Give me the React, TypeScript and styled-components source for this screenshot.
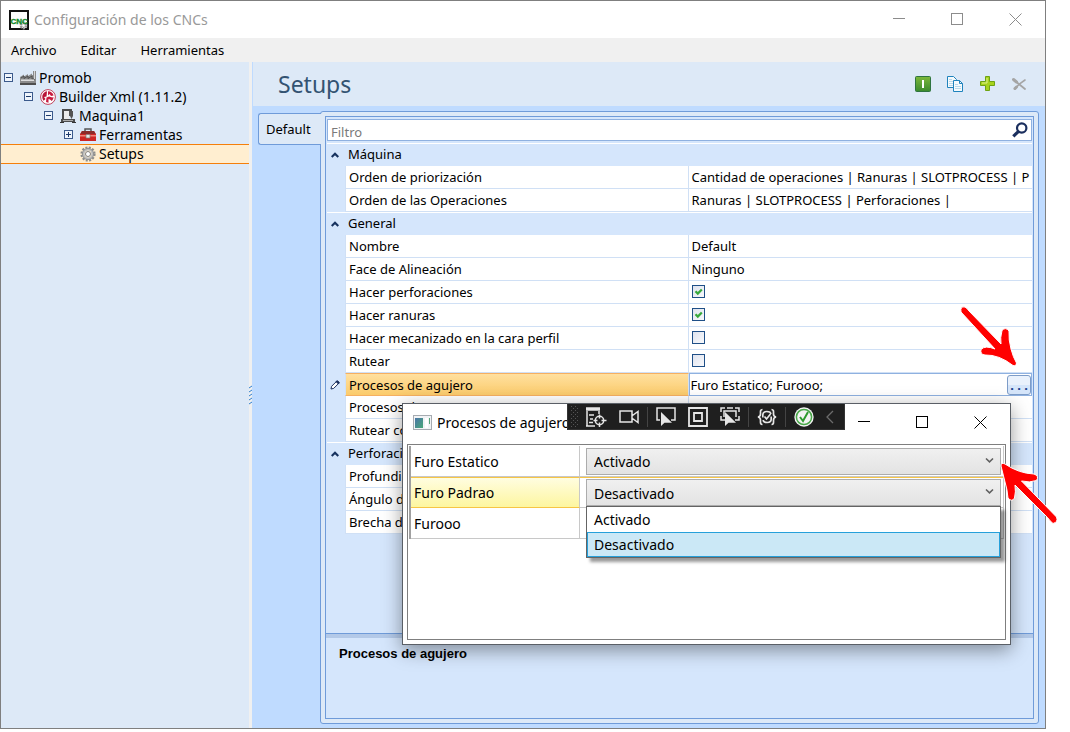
import React from "react";
import styled, { createGlobalStyle, css } from "styled-components";

const GlobalStyle = createGlobalStyle`
  *, *::before, *::after { box-sizing: border-box; }
  body { margin: 0; background: #fff; }
  button, input, select { font: inherit; color: inherit; margin: 0; }
  svg { display: block; flex: none; }
`;

const uiFont = `"Noto Sans", "Open Sans", sans-serif`;

/* ---------- main window ---------- */

const Page = styled.div`
  position: relative;
  font-family: ${uiFont};
  font-size: 13px;
  color: #000;
  padding: 0 24px 3px 0;
`;

const AppWindow = styled.div`
  display: flex;
  flex-direction: column;
  min-height: calc(100vh - 3px);
  border: 1px solid #7f7f7f;
  background: #fff;
`;

const TitleBar = styled.header<{ $active?: boolean }>`
  display: flex;
  align-items: center;
  height: 37px;
  padding: 0 1px 0 8px;
  gap: 5px;
  color: ${(p) => (p.$active ? "#000" : "#999")};
  font-size: 14px;
`;

const TitleText = styled.h1`
  flex: 1;
  margin: 0;
  font: inherit;
  white-space: nowrap;
`;

const Captions = styled.div`
  display: flex;
  height: 100%;
`;

const CaptionButton = styled.button`
  display: flex;
  align-items: center;
  justify-content: center;
  width: 58px;
  height: 100%;
  padding: 0;
  border: 0;
  background: none;
`;

const MenuBar = styled.nav`
  display: flex;
  align-items: center;
  gap: 24px;
  height: 24px;
  padding-left: 10px;
  background: #f0f0f0;
`;

const MenuItem = styled.button`
  border: 0;
  padding: 0;
  background: none;
  font-size: 13px;
  line-height: 20px;
`;

const Body = styled.div`
  flex: 1;
  display: flex;
`;

/* ---------- tree ---------- */

const TreePane = styled.aside`
  width: 248px;
  flex: none;
  background: #dde9f7;
`;

const Tree = styled.ul`
  list-style: none;
  margin: 0;
  padding: 6px 0 0;
`;

const TreeRow = styled.li<{ $level: number; $selected?: boolean }>`
  display: flex;
  align-items: center;
  height: 19px;
  padding-left: ${(p) => 3 + p.$level * 20}px;
  font-size: 14px;
  line-height: 18px;
  white-space: nowrap;
  ${(p) =>
    p.$selected &&
    css`
      height: 20px;
      background: #ffeed0;
      border-top: 1px solid #f57f0a;
      border-bottom: 1px solid #f57f0a;
    `}
`;

const Expander = styled.button`
  width: 9px;
  height: 9px;
  padding: 0;
  border: 0;
  background: none;
`;

const ExpanderSlot = styled.span`
  width: 16px;
  flex: none;
  display: flex;
`;

const TreeLabel = styled.span`
  padding-left: 3px;
`;

const Splitter = styled.div`
  display: flex;
  align-items: center;
  width: 3px;
  flex: none;
  background: #f0f0f0;
`;

/* ---------- content ---------- */

const Content = styled.main`
  flex: 1;
  min-width: 0;
  display: flex;
  flex-direction: column;
  background: #bfdbff;
`;

const ContentHeader = styled.div`
  display: flex;
  align-items: center;
  justify-content: space-between;
  height: 44px;
  padding: 0 18px 0 25px;
  background: #dde9f7;
  border-left: 1px solid #bfdbff;
`;

const ContentTitle = styled.h2`
  margin: 0;
  font-size: 23px;
  line-height: 32px;
  font-weight: 400;
  color: #335372;
`;

const Tools = styled.div`
  display: flex;
  gap: 16px;
`;

const ToolButton = styled.button`
  width: 16px;
  height: 16px;
  padding: 0;
  border: 0;
  background: none;
`;

const Workspace = styled.div`
  flex: 1;
  display: flex;
  align-items: stretch;
  padding: 5px 6px 4px;
`;

const Tab = styled.button`
  align-self: flex-start;
  z-index: 1;
  width: 63px;
  height: 32px;
  margin: 2px -1px 0 0;
  padding: 0 0 0 7px;
  text-align: left;
  border: 1px solid #6f9bd9;
  border-right: 0;
  border-radius: 3px 0 0 3px;
  background: #dde9f7;
`;

const TabPanel = styled.section`
  flex: 1;
  min-width: 0;
  display: flex;
  padding: 4px;
  border: 1px solid #6f9bd9;
  border-radius: 3px;
  background: #dde9f7;
`;

const GridFrame = styled.div`
  flex: 1;
  min-width: 0;
  display: flex;
  flex-direction: column;
  border: 1px solid #6f9bd9;
  background: #d5e6fc;
`;

const GridArea = styled.div`
  flex: 1;
  display: flex;
  flex-direction: column;
  gap: 2px;
  padding: 2px 1px;
`;

const FilterBox = styled.label`
  display: flex;
  align-items: center;
  height: 22px;
  padding: 0 3px;
  border: 1px solid #8fb1e0;
  background: #fff;
`;

const FilterInput = styled.input`
  flex: 1;
  min-width: 0;
  height: 20px;
  padding: 3px 0 0;
  border: 0;
  outline: 0;
  background: none;
  &::placeholder { color: #7a7a7a; opacity: 1; }
`;

const PropertyTable = styled.table`
  width: 100%;
  table-layout: fixed;
  border-collapse: separate;
  border-spacing: 0;
`;

const GutterCol = styled.col`
  width: 18px;
`;

const Gutter = styled.td`
  padding: 0;
  background: #d5e6fc;
`;

const Marker = styled.div`
  display: flex;
  justify-content: center;
  padding-right: 2px;
`;

const CategoryCell = styled.th`
  height: 23px;
  padding: 0 0 2px 3px;
  text-align: left;
  font-weight: 400;
  line-height: 20px;
  border-top: 1px solid #fff;
  background: #d5e6fc;
`;

const CategoryToggle = styled.td`
  height: 23px;
  padding: 0 0 1px;
  border-top: 1px solid #fff;
  background: #d5e6fc;
`;

const NameCell = styled.th<{ $selected?: boolean }>`
  height: 23px;
  padding: 0 0 0 3px;
  text-align: left;
  font-weight: 400;
  line-height: 20px;
  white-space: nowrap;
  overflow: hidden;
  background: #fff;
  border-left: 1px solid #d0e0f5;
  border-right: 1px solid #d0e0f5;
  border-bottom: 1px solid #d0e0f5;
  ${(p) =>
    p.$selected &&
    css`
      border-top: 1px solid #f6b062;
      border-bottom: 1px solid #f6b062;
      background: linear-gradient(#ffe0a0, #fbcb6b);
    `}
`;

const ValueCell = styled.td<{ $editing?: boolean }>`
  height: 23px;
  padding: 0 8px 0 3px;
  line-height: 20px;
  white-space: nowrap;
  overflow: hidden;
  background: #fff;
  border-bottom: 1px solid #d0e0f5;
  ${(p) =>
    p.$editing &&
    css`
      padding: 0 0 0 1px;
      border: 1px solid #8fb1e0;
    `}
`;

const Check = styled.input`
  && { margin: 0 0 1px; }
  appearance: none;
  display: block;
  width: 13px;
  height: 13px;
  border: 1px solid #1f4f87;
  background: linear-gradient(135deg, #dfe3ee, #f8f9fc);
  &:checked {
    background:
      url("data:image/svg+xml,%3Csvg xmlns='http://www.w3.org/2000/svg' width='11' height='11'%3E%3Cpath d='M2.5 5.2 4.8 7.6 8.8 3.4' fill='none' stroke='%2337a83c' stroke-width='2.2'/%3E%3C/svg%3E"),
      linear-gradient(135deg, #dfe3ee, #f8f9fc);
  }
`;

const Editor = styled.div`
  display: flex;
  align-items: center;
  height: 20px;
`;

const EditorInput = styled.input`
  flex: 1;
  min-width: 0;
  height: 20px;
  padding: 0;
  border: 0;
  outline: 0;
  background: none;
`;

const EllipsisButton = styled.button`
  width: 24px;
  height: 20px;
  padding: 0;
  border: 1px solid #7d9cc8;
  border-radius: 3px;
  background: linear-gradient(#e9f1fc 50%, #d5e5fa 50%);
  color: #1a3a8c;
  font-weight: 700;
  line-height: 16px;
`;

const HelpSplitter = styled.div`
  height: 5px;
  border-top: 1px solid #6f9bd9;
  background: #b3c9e8;
`;

const HelpPane = styled.div`
  height: 80px;
  padding: 7px 13px;
  font: 700 13px/17px "Liberation Sans", Arial, sans-serif;
`;

/* ---------- dialog ---------- */

const Dialog = styled.section`
  position: absolute;
  z-index: 2;
  left: 402px;
  top: 403px;
  width: 609px;
  height: 242px;
  display: flex;
  flex-direction: column;
  padding-bottom: 4px;
  border: 1px solid #5a5f66;
  background: #fff;
  box-shadow: 0 5px 18px rgba(0, 0, 0, 0.4);
`;

const DialogTitle = styled(TitleBar)`
  height: 36px;
  padding-left: 10px;
`;

const DialogBody = styled.div`
  flex: 1;
  margin: 4px 4px 0;
  padding: 1px 1px 0;
  border: 1px solid #7f7f7f;
`;

const ProcessTable = styled.table`
  width: 100%;
  table-layout: fixed;
  border-collapse: separate;
  border-spacing: 0;
  border-left: 2px solid #a0a0a0;
  border-right: 1px solid #c8c8c8;
`;

const LabelCol = styled.col`
  width: 169px;
`;

const ProcessName = styled.th<{ $selected?: boolean }>`
  height: 31px;
  padding: 1px 0 0 3px;
  text-align: left;
  font-size: 14px;
  font-weight: 400;
  line-height: 20px;
  border-bottom: 1px solid #c8c8c8;
  border-right: 1px solid #c8c8c8;
  ${(p) =>
    p.$selected &&
    css`
      border-top: 1px solid #f7c545;
      border-bottom: 1px solid #f7c545;
      background: linear-gradient(#fffde0, #fdf6a0);
    `}
`;

const ProcessValue = styled.td<{ $selected?: boolean }>`
  height: 31px;
  padding: 0 2px 0 6px;
  border-bottom: 1px solid #c8c8c8;
  border-top: ${(p) => (p.$selected ? "1px solid #f7c545" : "0")};
`;

const Combo = styled.div`
  position: relative;
`;

const ComboSelect = styled.select`
  appearance: none;
  display: block;
  width: 100%;
  height: 27px;
  padding: 1px 24px 0 7px;
  border: 1px solid #acacac;
  border-radius: 0;
  background: linear-gradient(#f0f0f0, #e3e3e3);
  font-size: 14px;
`;

const ComboArrow = styled.span`
  position: absolute;
  right: 7px;
  top: 9px;
  pointer-events: none;
`;

const ComboList = styled.ul`
  position: absolute;
  z-index: 1;
  top: 27px;
  left: 0;
  right: 0;
  margin: 0;
  padding: 0;
  list-style: none;
  border: 1px solid #646464;
  background: #fff;
  box-shadow: 4px 4px 3px rgba(0, 0, 0, 0.4);
`;

const ComboOption = styled.li<{ $active?: boolean }>`
  height: 25px;
  padding-left: 6px;
  font-size: 14px;
  line-height: 23px;
  border: 1px solid ${(p) => (p.$active ? "#26a0da" : "transparent")};
  background: ${(p) => (p.$active ? "#cbe8f6" : "#fff")};
`;

/* ---------- debug toolbar over the dialog ---------- */

const DebugBar = styled.div`
  position: absolute;
  top: 0;
  left: 164px;
  display: flex;
  align-items: center;
  width: 278px;
  height: 26px;
  padding: 0 8px 0 3px;
  background: #1f1f1f;
  border: 1px solid #333;
  border-top: 0;
`;

const DebugGroup = styled.div`
  display: flex;
  gap: 12px;
  padding: 0 8px;
  border-right: 1px solid #444;
  &:last-child { border-right: 0; padding-right: 0; }
`;

const DebugButton = styled.button`
  padding: 0;
  border: 0;
  background: none;
`;

const Annotations = styled.svg`
  position: absolute;
  z-index: 3;
  left: 955px;
  top: 300px;
  pointer-events: none;
`;

/* ---------- icons ---------- */

const CaptionIcons = ({ color }: { color: string }) => (
  <Captions>
    <CaptionButton aria-label="Minimizar">
      <svg width="13" height="13" stroke={color} fill="none" shapeRendering="crispEdges"><path d="M0 5.500h12" /></svg>
    </CaptionButton>
    <CaptionButton aria-label="Maximizar">
      <svg width="13" height="13" stroke={color} fill="none" shapeRendering="crispEdges"><rect x=".5" y=".5" width="11" height="11" /></svg>
    </CaptionButton>
    <CaptionButton aria-label="Cerrar">
      <svg width="13" height="13" stroke={color} fill="none"><path d="M.5.5l12 12M12.5.5l-12 12" /></svg>
    </CaptionButton>
  </Captions>
);

const CncIcon = () => (
  <svg width="20" height="20">
    <rect x="1" y="1" width="18" height="18" fill="#fdfdfd" stroke="#111" strokeWidth="2" />
    <circle cx="14.500" cy="15.500" r="2.600" fill="none" stroke="#999" strokeWidth="2.600" strokeDasharray="2 .7" />
    <text x="1.500" y="13.500" fontFamily="Liberation Sans, sans-serif" fontWeight="700" fontSize="8" fill="#128a2c" stroke="#128a2c" strokeWidth=".4">CNC</text>
  </svg>
);

const ExpanderIcon = ({ open }: { open: boolean }) => (
  <svg width="9" height="9" shapeRendering="crispEdges" stroke="#1d3a6b" fill="#eef4fb">
    <rect x=".5" y=".5" width="8" height="8" stroke="#3b5a8c" />
    <path d={open ? "M2 4.5h5" : "M2 4.5h5M4.5 2v5"} />
  </svg>
);

const FactoryIcon = () => (
  <svg width="16" height="16">
    <path d="M0 15V7l4-2.500v2l4-2.500v2l4-2.500V5h1V1h3v14z" fill="#8b8b8b" />
    <path d="M1 8l3-2v2.500l4-2.500v2.500L12 6v3h3" fill="none" stroke="#4f4f4f" />
    <path d="M1 9.500h13v1.500H1z" fill="#dcdcdc" />
    <path d="M0 13h16v2H0z" fill="#4e4e4e" />
    <path d="M14 1h1v8h-1z" fill="#d6d6d6" />
  </svg>
);

const BuilderIcon = () => (
  <svg width="16" height="16">
    <circle cx="8" cy="8" r="7.400" fill="#fff" stroke="#c0405a" strokeWidth="1" />
    <path d="M7 2.300C4.500 2.600 2.300 5 2.300 8c0 1.500.5 2.800 1.400 3.800L5.500 10 4 8l2.500-.5z" fill="#b81538" />
    <path d="M8 2.200c2.800 0 5 1.800 5.600 4.300L11 7 9.500 5 8 6.500z" fill="#c81c40" />
    <path d="M6.500 8.500l2.500-1 3.500 1 1-.5c0 1.600-.7 3-1.800 4L10 10.500 8.500 10v3.700L6 13z" fill="#c81c40" />
  </svg>
);

const MachineIcon = () => (
  <svg width="16" height="16">
    <path d="M3 12V2h8v4" fill="none" stroke="#4c4c4c" strokeWidth="2" />
    <path d="M4 3h5v8H4z" fill="#ececec" />
    <path d="M9 3h4v5l-1.500 3L10 8H9z" fill="#555" />
    <path d="M1 11h14v3H1z" fill="#4c4c4c" />
    <path d="M3 12h10v1H3z" fill="#ababab" />
    <path d="M0 14h4v1H0zM12 14h4v1h-4z" fill="#333" />
  </svg>
);

const ToolboxIcon = () => (
  <svg width="16" height="16">
    <path d="M5 4.500V2h6v2.500" fill="none" stroke="#555" strokeWidth="1.500" />
    <path d="M2 4h12l2 3v7H0V7z" fill="#cf2525" />
    <path d="M2 4h12l1.500 3H.5z" fill="#8c2a2a" />
    <path d="M0 8h16v1.500H0z" fill="#f0857a" />
    <path d="M6 7.500h4v3.500H6z" fill="#e8e8e8" stroke="#777" strokeWidth=".7" />
  </svg>
);

const GearIcon = () => (
  <svg width="16" height="16" fill="none">
    <circle cx="8" cy="8" r="6.400" stroke="#8d8d8d" strokeWidth="2.400" strokeDasharray="2 1.350" />
    <circle cx="8" cy="8" r="4.600" stroke="#bdbdbd" strokeWidth="2.400" />
    <circle cx="8" cy="8" r="5.600" stroke="#8a8a8a" strokeWidth=".8" />
    <circle cx="8" cy="8" r="2.500" stroke="#7f7f7f" strokeWidth="1" fill="#fff" />
  </svg>
);

const PowerIcon = () => (
  <svg width="16" height="16">
    <defs><linearGradient id="green" x2="0" y2="1"><stop stopColor="#7cb83a" /><stop offset="1" stopColor="#3a8a2e" /></linearGradient></defs>
    <rect x=".5" y=".5" width="15" height="15" rx="1" fill="url(#green)" stroke="#2f7440" />
    <path d="M7 4h2v8H7z" fill="#fff" />
  </svg>
);

const CopyIcon = () => (
  <svg width="16" height="16" stroke="#1f83bd" fill="#f4fafd">
    <path d="M.5.500h6l3 3v8h-9z" />
    <path d="M2 3.500h3M2 5.500h4M2 7.500h4M2 9.500h4" stroke="#b8d9ea" />
    <path d="M6.500 4.500h6l3 3v8h-9z" />
    <path d="M12.500 4.500v3h3" fill="none" />
    <path d="M8 8.500h3M8 10.500h6M8 12.500h6" stroke="#b8d9ea" />
  </svg>
);

const PlusIcon = () => (
  <svg width="16" height="16">
    <path d="M6.500.500h4v5h5v4h-5v5h-4v-5h-5v-4h5z" fill="#a6d21c" stroke="#6ea312" />
    <path d="M8 2v5H3" fill="none" stroke="#dff08c" />
  </svg>
);

const DeleteIcon = () => (
  <svg width="16" height="16" fill="none" stroke="#a5a5a5" strokeLinecap="round">
    <path d="M3 4l3 2.500 8 6.500" strokeWidth="1.800" />
    <path d="M14 4 9 7.500 3.500 13" strokeWidth="1.600" />
    <path d="M2.500 3.500l3 2.500M4 12.500l1.500-1.500" strokeWidth="3" />
  </svg>
);

const SearchIcon = () => (
  <svg width="16" height="16" fill="none" stroke="#1b2f5e">
    <circle cx="9.700" cy="6" r="4.700" strokeWidth="2.200" />
    <path d="M6.500 9.300 1.300 14.300" strokeWidth="3.200" />
  </svg>
);

const UpIcon = () => (
  <svg width="8" height="6" fill="none" stroke="#17335f" strokeWidth="2.200"><path d="M.7 5 4 1.700 7.300 5" /></svg>
);

const PencilIcon = () => (
  <svg width="10" height="10" stroke="#1b2f5e">
    <path d="M1 9l.6-2.700L6.300 1.600l2.100 2.100-4.700 4.700z" fill="#fff" />
    <path d="M6 1.500 7.500.700l1.800 1.800-.8 1.500z" fill="#1b2f5e" />
  </svg>
);

const FormIcon = () => (
  <svg width="19" height="15">
    <rect x=".5" y=".5" width="18" height="14" fill="#f1f3f5" stroke="#a6abb1" />
    <defs><linearGradient id="screen" x2="1" y2="1"><stop stopColor="#4a74a8" /><stop offset="1" stopColor="#49a878" /></linearGradient></defs>
    <rect x="2" y="3" width="8" height="10" fill="url(#screen)" />
    <rect x="12" y="3" width="3" height="10" fill="#fff" />
    <rect x="16" y="3" width="1" height="6" fill="#59a47a" />
  </svg>
);

const DownIcon = () => (
  <svg width="9" height="7" fill="none" stroke="#606060" strokeWidth="1.600"><path d="M1 1.500l3.500 3.300L8 1.500" /></svg>
);

const Grip = () => (
  <svg width="7" height="22" fill="#555">
    {[0, 4, 8, 12, 16, 20].map((y) => (
      <React.Fragment key={y}>
        <rect x="0" y={y} width="1" height="1" /><rect x="4" y={y} width="1" height="1" />
        <rect x="2" y={y + 2} width="1" height="1" /><rect x="6" y={y + 2} width="1" height="1" />
      </React.Fragment>
    ))}
  </svg>
);

const pointer = "M5 5v14l3.500-3.200 2.500 0H16z";

const TreeDebugIcon = () => (
  <svg width="21" height="20" fill="none" stroke="#e6e6e6" strokeWidth="1.500">
    <path d="M0 2h14" strokeWidth="3.500" />
    <path d="M1 4v15M13 4v3" />
    <path d="M3 8h5M4 12h3M3 15.500h4M0 19h9" />
    <circle cx="13.500" cy="13.500" r="4.200" />
    <path d="M13.500 7.500v4M13.500 15.500v4.500M7.500 13.500h4M15.500 13.500h5" />
  </svg>
);
const CameraIcon = () => (
  <svg width="20" height="20" fill="none" stroke="#e6e6e6" strokeWidth="1.500">
    <path d="M1 4h12v11H1zM13.500 8.500l5.500-4v11l-5.500-4" />
  </svg>
);
const SelectIcon = () => (
  <svg width="20" height="20" fill="none" stroke="#e6e6e6" strokeWidth="1.500">
    <path d="M4 13H1V1h18v12h-4" /><path d={pointer} fill="#e6e6e6" stroke="none" />
  </svg>
);
const BoxesIcon = () => (
  <svg width="20" height="20" fill="none" stroke="#e6e6e6" strokeWidth="1.800">
    <path d="M1 1h18v18H1zM6 6h8v8H6z" />
  </svg>
);
const DashedIcon = () => (
  <svg width="20" height="20" fill="none" stroke="#e6e6e6" strokeWidth="1.500">
    <path d="M1 5V1h4M15 1h4v4M1 9v4h4M19 9v4h-4M4 10V4h12v6M7 1h6" /><path d={pointer} fill="#e6e6e6" stroke="none" />
  </svg>
);
const ReloadIcon = () => (
  <svg width="20" height="20" fill="none" stroke="#e6e6e6" strokeWidth="1.700">
    <path d="M5.500 2.500C3 2.500 3.500 5 3.500 7S3 9.500 1 10c2 .5 2.500 1 2.500 3s-.5 4.500 2 4.500M14.500 2.500c2.500 0 2 2.500 2 4.500s.5 2.500 2.500 3c-2 .5-2.500 1-2.500 3s.5 4.500-2 4.500" />
    <path d="M5.800 10.500V8c0-2.500 1.500-3.500 4-3.500s4 1 4 2.500M14.200 9.500V12c0 2.500-1.500 3.500-4 3.500s-4-1-4-2.500M7.500 9.500l2 2.500 4-5" />
  </svg>
);
const OkIcon = () => (
  <svg width="20" height="20" fill="none">
    <circle cx="10" cy="10" r="9.700" fill="#f3f3f3" />
    <circle cx="10" cy="10" r="7.600" stroke="#4aa84a" strokeWidth="1.500" />
    <path d="M6 10l3 4 5-9" stroke="#2e9a2e" strokeWidth="2" />
  </svg>
);
const BackIcon = () => (
  <svg width="8" height="20" fill="none" stroke="#6c6c6c" strokeWidth="1.300"><path d="M7 4 1 10l6 6" /></svg>
);

/* ---------- data ---------- */

type Value = string | boolean;
interface Property { name: string; value: Value; editing?: boolean }

const categories: { title: string; items: Property[] }[] = [
  {
    title: "Máquina",
    items: [
      { name: "Orden de priorización", value: "Cantidad de operaciones | Ranuras | SLOTPROCESS | P" },
      { name: "Orden de las Operaciones", value: "Ranuras | SLOTPROCESS | Perforaciones |" },
    ],
  },
  {
    title: "General",
    items: [
      { name: "Nombre", value: "Default" },
      { name: "Face de Alineación", value: "Ninguno" },
      { name: "Hacer perforaciones", value: true },
      { name: "Hacer ranuras", value: true },
      { name: "Hacer mecanizado en la cara perfil", value: false },
      { name: "Rutear", value: false },
      { name: "Procesos de agujero", value: "Furo Estatico; Furooo;", editing: true },
      { name: "Procesos de", value: "SLOTPROCESS" },
      { name: "Rutear co", value: "" },
    ],
  },
  {
    title: "Perforaci",
    items: [
      { name: "Profundi", value: "" },
      { name: "Ángulo d", value: "" },
      { name: "Brecha d", value: "" },
    ],
  },
];

const treeItems = [
  { label: "Promob", icon: <FactoryIcon />, open: true },
  { label: "Builder Xml (1.11.2)", icon: <BuilderIcon />, open: true },
  { label: "Maquina1", icon: <MachineIcon />, open: true },
  { label: "Ferramentas", icon: <ToolboxIcon />, open: false },
];

const processes = [
  { name: "Furo Estatico", value: "Activado" },
  { name: "Furo Padrao", value: "Desactivado", selected: true },
  { name: "Furooo", value: "Activado" },
];

const states = ["Activado", "Desactivado"];

const PropertyValue = ({ item }: { item: Property }) => {
  if (typeof item.value === "boolean") {
    return <Check type="checkbox" defaultChecked={item.value} aria-label={item.name} />;
  }
  if (item.editing) {
    return (
      <Editor>
        <EditorInput defaultValue={item.value} aria-label={item.name} />
        <EllipsisButton aria-label="Editar procesos">. . .</EllipsisButton>
      </Editor>
    );
  }
  return <>{item.value}</>;
};

export default function App() {
  return (
    <Page>
      <GlobalStyle />
      <AppWindow>
        <TitleBar>
          <CncIcon />
          <TitleText>Configuración de los CNCs</TitleText>
          <CaptionIcons color="#8c8c8c" />
        </TitleBar>
        <MenuBar>
          <MenuItem>Archivo</MenuItem>
          <MenuItem>Editar</MenuItem>
          <MenuItem>Herramientas</MenuItem>
        </MenuBar>
        <Body>
          <TreePane>
            <Tree>
              {treeItems.map((item, level) => (
                <TreeRow key={item.label} $level={level}>
                  <ExpanderSlot>
                    <Expander aria-label={item.label}><ExpanderIcon open={item.open} /></Expander>
                  </ExpanderSlot>
                  {item.icon}
                  <TreeLabel>{item.label}</TreeLabel>
                </TreeRow>
              ))}
              <TreeRow $level={3} $selected>
                <ExpanderSlot />
                <GearIcon />
                <TreeLabel>Setups</TreeLabel>
              </TreeRow>
            </Tree>
          </TreePane>
          <Splitter>
            <svg width="3" height="20" stroke="#2f7fd0">
              <path d="M0 3l3-2M0 7l3-2M0 11l3-2M0 15l3-2M0 19l3-2" />
            </svg>
          </Splitter>
          <Content>
            <ContentHeader>
              <ContentTitle>Setups</ContentTitle>
              <Tools>
                <ToolButton aria-label="Activar"><PowerIcon /></ToolButton>
                <ToolButton aria-label="Copiar"><CopyIcon /></ToolButton>
                <ToolButton aria-label="Agregar"><PlusIcon /></ToolButton>
                <ToolButton aria-label="Eliminar"><DeleteIcon /></ToolButton>
              </Tools>
            </ContentHeader>
            <Workspace>
              <Tab>Default</Tab>
              <TabPanel>
                <GridFrame>
                  <GridArea>
                    <FilterBox>
                      <FilterInput placeholder="Filtro" aria-label="Filtro" />
                      <SearchIcon />
                    </FilterBox>
                    <PropertyTable>
                      <colgroup><GutterCol /><col /><col /></colgroup>
                      <tbody>
                        {categories.map((category) => (
                          <React.Fragment key={category.title}>
                            <tr>
                              <CategoryToggle><Marker><UpIcon /></Marker></CategoryToggle>
                              <CategoryCell colSpan={2}>{category.title}</CategoryCell>
                            </tr>
                            {category.items.map((item) => (
                              <tr key={item.name}>
                                <Gutter>{item.editing && <Marker><PencilIcon /></Marker>}</Gutter>
                                <NameCell $selected={item.editing}>{item.name}</NameCell>
                                <ValueCell $editing={item.editing}><PropertyValue item={item} /></ValueCell>
                              </tr>
                            ))}
                          </React.Fragment>
                        ))}
                      </tbody>
                    </PropertyTable>
                  </GridArea>
                  <HelpSplitter />
                  <HelpPane>Procesos de agujero</HelpPane>
                </GridFrame>
              </TabPanel>
            </Workspace>
          </Content>
        </Body>
      </AppWindow>

      <Dialog role="dialog" aria-label="Procesos de agujero">
        <DialogTitle $active>
          <FormIcon />
          <TitleText as="h2">Procesos de agujero</TitleText>
          <CaptionIcons color="#000" />
        </DialogTitle>
        <DialogBody>
          <ProcessTable>
            <colgroup><LabelCol /><col /></colgroup>
            <tbody>
              {processes.map((process) => (
                <tr key={process.name}>
                  <ProcessName $selected={process.selected}>{process.name}</ProcessName>
                  <ProcessValue $selected={process.selected}>
                    <Combo>
                      <ComboSelect defaultValue={process.value} aria-label={process.name}>
                        {states.map((state) => <option key={state}>{state}</option>)}
                      </ComboSelect>
                      <ComboArrow><DownIcon /></ComboArrow>
                      {process.selected && (
                        <ComboList role="listbox">
                          {states.map((state) => (
                            <ComboOption key={state} role="option" $active={state === process.value}>{state}</ComboOption>
                          ))}
                        </ComboList>
                      )}
                    </Combo>
                  </ProcessValue>
                </tr>
              ))}
            </tbody>
          </ProcessTable>
        </DialogBody>
        <DebugBar>
          <Grip />
          <DebugGroup>
            <DebugButton aria-label="Árbol visual"><TreeDebugIcon /></DebugButton>
            <DebugButton aria-label="Cámara"><CameraIcon /></DebugButton>
          </DebugGroup>
          <DebugGroup>
            <DebugButton aria-label="Seleccionar"><SelectIcon /></DebugButton>
            <DebugButton aria-label="Bordes"><BoxesIcon /></DebugButton>
            <DebugButton aria-label="Seguir foco"><DashedIcon /></DebugButton>
          </DebugGroup>
          <DebugGroup>
            <DebugButton aria-label="Recarga"><ReloadIcon /></DebugButton>
          </DebugGroup>
          <DebugGroup>
            <DebugButton aria-label="Correcto"><OkIcon /></DebugButton>
            <DebugButton aria-label="Contraer"><BackIcon /></DebugButton>
          </DebugGroup>
        </DebugBar>
      </Dialog>

      <Annotations width="110" height="230" fill="#f00" stroke="#fff" strokeWidth="1">
        <path d="M6 12Q5 6 10 7q2 1 4 4l32 33q-1-6 1-13.500 3.500-4 7 .5-.500 9 2 18 2 8 5.500 14-.500 3.500-3.500 2.500Q44 54.500 30 55q-5-.5-4-5.500 4-4.500 14-.5z" />
        <path d="M46 166q0-4 4-2 14 9.500 29 10 5.500 2 2.500 6.500-6.500 2.500-15 .5l35 36q2 5-3.500 6.500-3.500-3-5.500-6L60 185q1 7-.5 13-2.500 4.500-6.500 0-.5-8-3.500-18z" />
      </Annotations>
    </Page>
  );
}
